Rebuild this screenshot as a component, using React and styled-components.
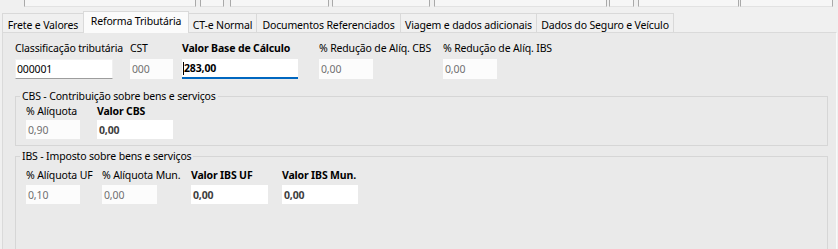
import React from 'react';
import styled, { createGlobalStyle, css } from 'styled-components';

const GlobalStyle = createGlobalStyle`
  html, body {
    margin: 0;
    padding: 0;
    background: #f0f0f0;
    overflow: hidden;
  }
  body {
    font-family: "Noto Sans", "Liberation Sans", sans-serif;
    font-size: 10.5px;
    letter-spacing: -0.15px;
    color: #000;
  }
`;

const Screen = styled.div`
  width: 838px;
  height: 249px;
  overflow: hidden;
  background: #f0f0f0;
`;

/* pieces of the form above, cut off by the window */
const TopStrip = styled.div`
  display: flex;
  height: 7px;
`;

const Stub = styled.div`
  box-sizing: border-box;
  height: 7px;
  width: ${(p) => p.$w}px;
  margin-left: ${(p) => p.$ml}px;
  background: #f6f6f6;
  border: 1px solid #a9a9a9;
  border-top: none;
  border-bottom-color: #e2e2e2;
`;

const TabBar = styled.div`
  display: flex;
  align-items: flex-end;
  height: 21px;
  margin-top: 4px;
  padding-left: 2px;
  position: relative;
  z-index: 2;
`;

const Tab = styled.div`
  box-sizing: border-box;
  display: flex;
  justify-content: center;
  width: ${(p) => p.$w}px;
  height: 19px;
  padding-top: 4px;
  line-height: 14px;
  white-space: nowrap;
  background: #f0f0f0;
  border: 1px solid #d9d9d9;
  border-bottom: none;
  margin-left: -1px;
  &:first-child {
    margin-left: 0;
  }
  ${(p) =>
    p.$active &&
    css`
      height: 22px;
      padding-top: 2px;
      margin-bottom: -1px;
      background: #fbfbfb;
      border-color: #dadada;
    `}
`;

const Panel = styled.div`
  box-sizing: border-box;
  height: 240px;
  margin: 0 1px 0 2px;
  padding: 8px 8px 0 12px;
  background: #eaeaea;
  border: 1px solid #dadada;
  border-right-color: #fafafa;
`;

const FieldRow = styled.div`
  display: flex;
  margin-left: ${(p) => p.$ml || 0}px;
  margin-top: ${(p) => p.$mt || 0}px;
`;

const Field = styled.div`
  display: flex;
  flex-direction: column;
  width: ${(p) => (p.$w ? `${p.$w}px` : 'auto')};
  flex: none;
`;

const Label = styled.span`
  line-height: 14px;
  height: 14px;
  white-space: nowrap;
  font-weight: ${(p) => (p.$bold ? 700 : 400)};
`;

const Box = styled.div`
  box-sizing: border-box;
  display: flex;
  align-items: center;
  width: ${(p) => p.$w}px;
  height: ${(p) => p.$h || 19}px;
  margin-top: ${(p) => p.$gap}px;
  padding-left: 2px;
  background: #fcfcfc;
  color: #707070;
  white-space: nowrap;
  ${(p) =>
    p.$kind === 'edit' &&
    css`
      background: #fff;
      color: #000;
      border: 1px solid #f0f0f0;
      border-bottom-color: #9d9d9d;
      padding-left: 1px;
    `}
  ${(p) =>
    p.$kind === 'value' &&
    css`
      background: #fff;
      color: #404040;
      font-weight: 700;
    `}
  ${(p) =>
    p.$kind === 'focus' &&
    css`
      background: #fff;
      color: #000;
      font-weight: 700;
      border-bottom: 2px solid #0067c0;
      padding-left: 1px;
    `}
`;

const Caret = styled.span`
  display: inline-block;
  width: 1px;
  height: 13px;
  background: #000;
`;

const Group = styled.fieldset`
  margin: ${(p) => p.$mt}px 0 0 0;
  padding: 0 0 ${(p) => p.$pb}px 4px;
  border: 1px solid #d6d6d6;
  min-width: 0;
  height: ${(p) => (p.$h ? `${p.$h}px` : 'auto')};
  box-sizing: border-box;
`;

const Legend = styled.legend`
  padding: 0 2px;
  line-height: 14px;
`;

const firstRow = [
  { label: 'Classificação tributária', w: 115, box: 98, value: '000001', kind: 'edit', h: 20 },
  { label: 'CST', w: 52, box: 43, value: '000', h: 20 },
  { label: 'Valor Base de Cálculo', w: 137, box: 116, value: '283,00', kind: 'focus', bold: true, h: 20, caret: true },
  { label: '% Redução de Alíq. CBS', w: 124, box: 54, value: '0,00', h: 20 },
  { label: '% Redução de Alíq. IBS', box: 54, value: '0,00', h: 20 },
];

const cbsRow = [
  { label: '% Alíquota', w: 71, box: 54, value: '0,90' },
  { label: 'Valor CBS', box: 76, value: '0,00', kind: 'value', bold: true },
];

const ibsRow = [
  { label: '% Alíquota UF', w: 76, box: 54, value: '0,10' },
  { label: '% Alíquota Mun.', w: 89, box: 55, value: '0,00' },
  { label: 'Valor IBS UF', w: 91, box: 77, value: '0,00', kind: 'value', bold: true },
  { label: 'Valor IBS Mun.', box: 76, value: '0,00', kind: 'value', bold: true },
];

const stubs = [
  { ml: 24, w: 172 },
  { ml: 4, w: 24 },
  { ml: 6, w: 99 },
  { ml: 3, w: 98 },
  { ml: 4, w: 173 },
  { ml: 2, w: 25 },
  { ml: 4, w: 101 },
  { ml: 1, w: 93 },
];

const tabs = [
  { label: 'Frete e Valores', w: 82 },
  { label: 'Reforma Tributária', w: 106, active: true },
  { label: 'CT-e Normal', w: 69 },
  { label: 'Documentos Referenciados', w: 145 },
  { label: 'Viagem e dados adicionais', w: 137 },
  { label: 'Dados do Seguro e Veículo', w: 138 },
];

function Fields({ items, gap }) {
  return items.map((f) => (
    <Field key={f.label} $w={f.w}>
      <Label $bold={f.bold}>{f.label}</Label>
      <Box $w={f.box} $h={f.h} $gap={gap} $kind={f.kind}>
        {f.caret && <Caret />}
        {f.value}
      </Box>
    </Field>
  ));
}

export default function App() {
  return (
    <Screen>
      <GlobalStyle />
      <TopStrip>
        {stubs.map((s, i) => (
          <Stub key={i} $ml={s.ml} $w={s.w} />
        ))}
      </TopStrip>
      <TabBar>
        {tabs.map((t) => (
          <Tab key={t.label} $w={t.w} $active={t.active}>
            {t.label}
          </Tab>
        ))}
      </TabBar>
      <Panel>
        <FieldRow>
          <Fields items={firstRow} gap={4} />
        </FieldRow>
        <Group $mt={10} $pb={6}>
          <Legend>CBS - Contribuição sobre bens e serviços</Legend>
          <FieldRow $ml={6} $mt={1}>
            <Fields items={cbsRow} gap={2} />
          </FieldRow>
        </Group>
        <Group $mt={3} $pb={0} $h={120}>
          <Legend>IBS - Imposto sobre bens e serviços</Legend>
          <FieldRow $ml={6} $mt={5}>
            <Fields items={ibsRow} gap={3} />
          </FieldRow>
        </Group>
      </Panel>
    </Screen>
  );
}
